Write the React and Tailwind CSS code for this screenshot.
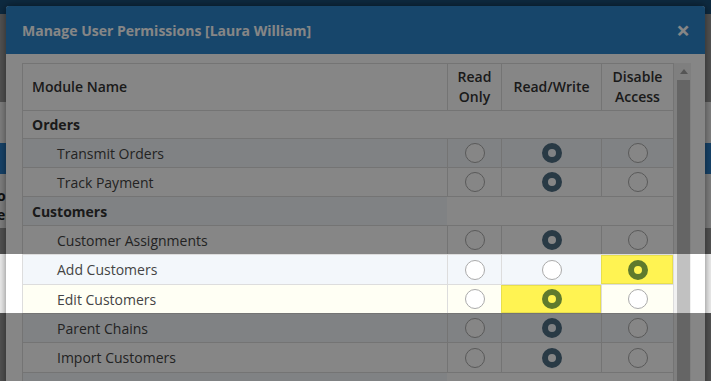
import React from "react";

const groups = [
  {
    name: "Orders",
    items: [
      { name: "Transmit Orders", value: "rw" },
      { name: "Track Payment", value: "rw" },
    ],
  },
  {
    name: "Customers",
    items: [
      { name: "Customer Assignments", value: "rw" },
      { name: "Add Customers", value: "da", hi: "da", bg: "bg-[#f3f7fb]", h: "h-[30px]" },
      { name: "Edit Customers", value: "rw", hi: "rw", bg: "bg-[#fffff4]" },
      { name: "Parent Chains", value: "rw" },
      { name: "Import Customers", value: "rw", h: "h-[30px]" },
    ],
  },
  { name: "", items: [] },
];

function Radio({ on, hi }) {
  if (on && hi) return <span className="block h-5 w-5 rounded-full border-[6px] border-[#5f7a2d]" />;
  if (on) return <span className="block h-5 w-5 rounded-full border-[6px] border-[#4f6e84]" />;
  return <span className="block h-5 w-5 rounded-full border border-[#aaaaaa] bg-white" />;
}

function Cell({ on, hi, bg }) {
  return (
    <div
      className={`flex items-center justify-center border-l border-[#dddddd] ${
        hi ? "bg-[#fff352] outline outline-1 -outline-offset-1 outline-[#e8df4c]" : bg
      }`}
    >
      <Radio on={on} hi={hi} />
    </div>
  );
}

export default function App() {
  let idx = 0;
  const rows = [];
  groups.forEach((g, gi) => {
    const stripe = idx % 2 === 1;
    idx++;
    rows.push(
      <div
        key={"g" + gi}
        className={`grid grid-cols-[424px_226px] border-b border-[#dddddd] ${gi === 0 ? "h-[28px]" : "h-[29px]"}`}
      >
        <div className={`flex items-center pl-[9px] font-bold text-[#333333] ${stripe ? "bg-[#f3f7fb]" : "bg-white"}`}>
          {g.name}
        </div>
        <div className="bg-white" />
      </div>
    );
    g.items.forEach((it) => {
      const bg = it.bg || (idx % 2 === 1 ? "bg-[#f3f7fb]" : "bg-white");
      idx++;
      rows.push(
        <div
          key={it.name}
          className={`grid grid-cols-[424px_54px_100px_72px] border-b border-[#dddddd] ${it.h || "h-[29px]"} ${bg}`}
        >
          <div className="flex items-center pl-[34px] text-[#444444]">{it.name}</div>
          <Cell on={it.value === "ro"} hi={it.hi === "ro"} bg={bg} />
          <Cell on={it.value === "rw"} hi={it.hi === "rw"} bg={bg} />
          <Cell on={it.value === "da"} hi={it.hi === "da"} bg={bg} />
        </div>
      );
    });
  });

  return (
    <div className="relative h-[381px] w-[711px] overflow-hidden bg-[#9c9c9c] font-['Open_Sans',sans-serif] text-[14px]">
      {/* page behind the modal */}
      <div className="h-[14px] bg-[#1b507a]" />
      <div className="mt-[88px] flex h-[126px] flex-col bg-[#f4f4f4]">
        <div className="mt-[41px] h-[31px] bg-[#2c80ca]" />
        <div className="pl-px pt-3 text-[14px] font-bold leading-[19px] text-[#222222]">
          <div className="-ml-[4px]">ou</div>
          <div className="-ml-[4px]">er</div>
        </div>
      </div>

      {/* tour helper band */}
      <div className="absolute left-0 right-0 top-[254px] h-[59px] bg-white/85" />

      {/* modal */}
      <div className="absolute left-[6px] top-[6px] h-[420px] w-[699px] overflow-hidden rounded-t-[3px] bg-white shadow-[0_0_8px_rgba(0,0,0,0.5)]">
        <div className="flex h-[48px] items-center justify-between bg-[#2c85cc] pl-4 pr-[15px]">
          <h1 className="text-[14px] font-bold text-white">Manage User Permissions [Laura William]</h1>
          <span className="text-[24px] font-bold leading-none text-white">×</span>
        </div>
        <div className="flex pl-4 pt-[9px]">
          <div className="w-[652px] border-x border-t border-[#dddddd] bg-white">
            <div className="grid h-[47px] grid-cols-[424px_54px_100px_72px] border-b border-[#dddddd] font-semibold leading-[20px] text-[#333333]">
              <div className="flex items-center pl-[9px]">Module Name</div>
              <div className="flex items-center justify-center border-l border-[#dddddd] text-center">
                Read
                <br />
                Only
              </div>
              <div className="flex items-center justify-center border-l border-[#dddddd] text-center">Read/Write</div>
              <div className="flex items-center justify-center border-l border-[#dddddd] text-center">
                Disable
                <br />
                Access
              </div>
            </div>
            {rows}
          </div>
          <div className="flex w-[17px] flex-col bg-[#f1f1f1]">
            <div className="flex h-[17px] items-center justify-center pl-[2px]">
              <svg width="8" height="5" viewBox="0 0 8 5">
                <path d="M4 0 L8 5 L0 5 Z" fill="#a3a3a3" />
              </svg>
            </div>
            <div className="ml-[3px] h-[400px] w-[13px] bg-[#c1c1c1]" />
          </div>
        </div>
      </div>

      {/* tour overlay */}
      <div className="absolute left-0 right-0 top-0 h-[254px] bg-black/[0.475]" />
      <div className="absolute bottom-0 left-0 right-0 top-[313px] bg-black/[0.475]" />
    </div>
  );
}
